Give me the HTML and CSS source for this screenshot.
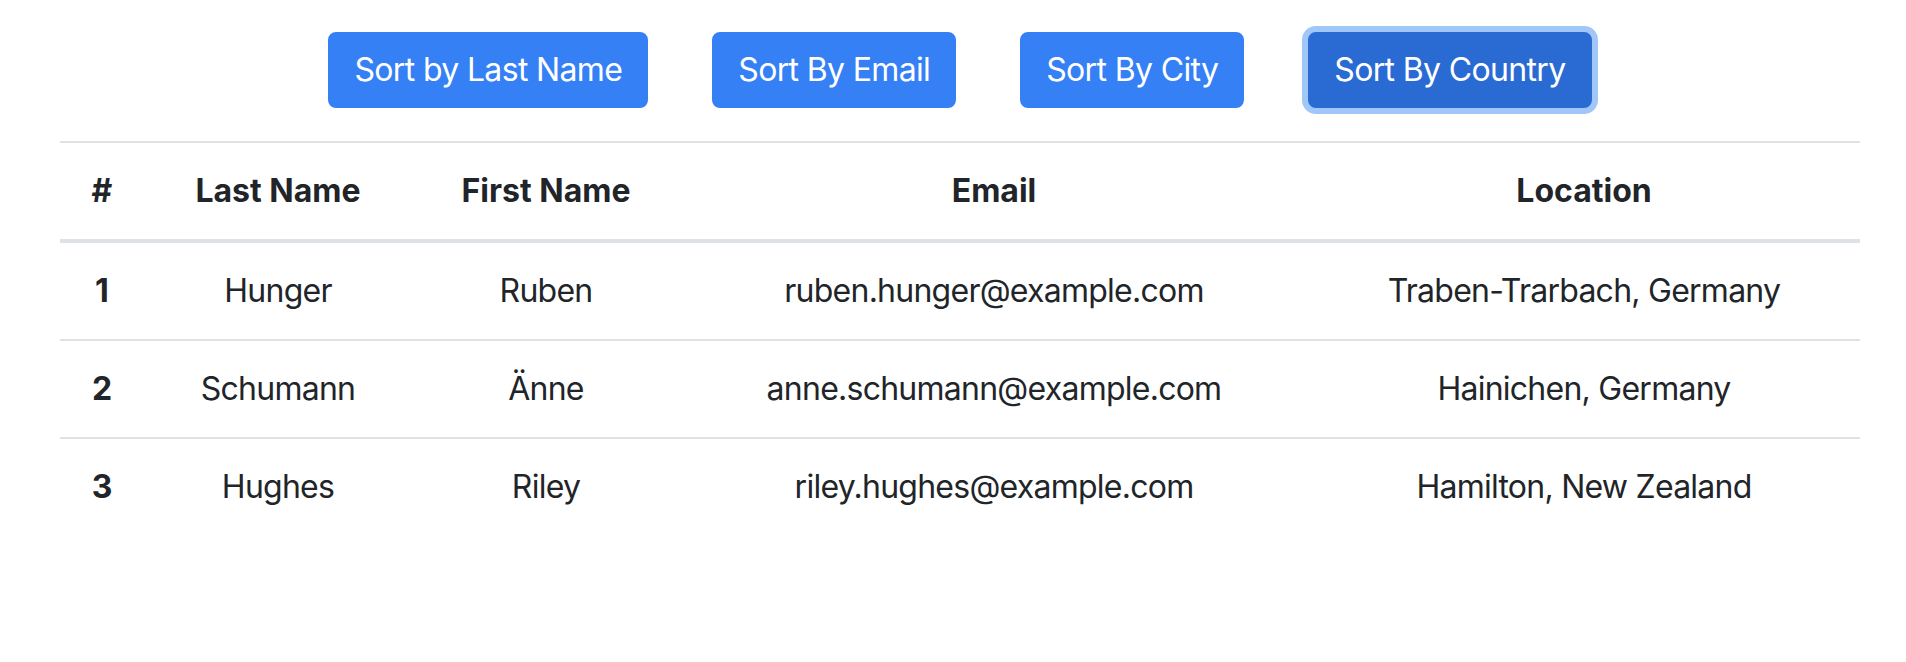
FILE: index.html
```html
<!DOCTYPE html>
<html lang="en">
<head>
<meta charset="utf-8">
<title>Users</title>
<link rel="stylesheet" href="styles.css">
</head>
<body>
<div class="page">
  <div class="toolbar">
    <button class="btn">Sort by Last Name</button>
    <button class="btn">Sort By Email</button>
    <button class="btn">Sort By City</button>
    <button class="btn btn-active">Sort By Country</button>
  </div>
  <table class="users">
    <colgroup>
      <col class="c-num">
      <col class="c-last">
      <col class="c-first">
      <col class="c-email">
      <col class="c-loc">
    </colgroup>
    <thead>
      <tr><th>#</th><th>Last Name</th><th>First Name</th><th>Email</th><th>Location</th></tr>
    </thead>
    <tbody>
      <tr><th>1</th><td>Hunger</td><td>Ruben</td><td>ruben.hunger@example.com</td><td>Traben-Trarbach, Germany</td></tr>
      <tr><th>2</th><td>Schumann</td><td>Änne</td><td>anne.schumann@example.com</td><td>Hainichen, Germany</td></tr>
      <tr><th>3</th><td>Hughes</td><td>Riley</td><td>riley.hughes@example.com</td><td>Hamilton, New Zealand</td></tr>
    </tbody>
  </table>
</div>
</body>
</html>
```

FILE: styles.css
```css
html, body {
  margin: 0;
  background: #ffffff;
}
body {
  font-family: Inter, "Liberation Sans", sans-serif;
  color: #212529;
  font-size: 32px;
  line-height: 48px;
}
.page {
  padding: 32px 46px 0 60px;
}
.toolbar {
  display: flex;
  justify-content: center;
  gap: 64px;
  margin-bottom: 33px;
}
.btn {
  font-family: inherit;
  font-size: 32px;
  line-height: 48px;
  letter-spacing: -0.65px;
  color: #ffffff;
  background: #3580f5;
  border: 2px solid #3580f5;
  border-radius: 8px;
  padding: 12px 24px;
  margin: 0;
  cursor: pointer;
}
.btn-active {
  background: #2a6bd3;
  border-color: #2a6bd3;
  box-shadow: 0 0 0 6px #a1c6f8;
}
.users {
  width: 1800px;
  border-collapse: collapse;
  table-layout: fixed;
  text-align: center;
}
.c-num { width: 84px; }
.c-last { width: 268px; }
.c-first { width: 268px; }
.c-email { width: 628px; }
.c-loc { width: 552px; }
.users th, .users td {
  padding: 24px 0;
  border-top: 2px solid #dee2e6;
  font-weight: 400;
}
.users td {
  letter-spacing: -0.75px;
}
.users th {
  font-weight: 700;
}
.users thead th {
  border-bottom: 4px solid #dee2e6;
}
```
